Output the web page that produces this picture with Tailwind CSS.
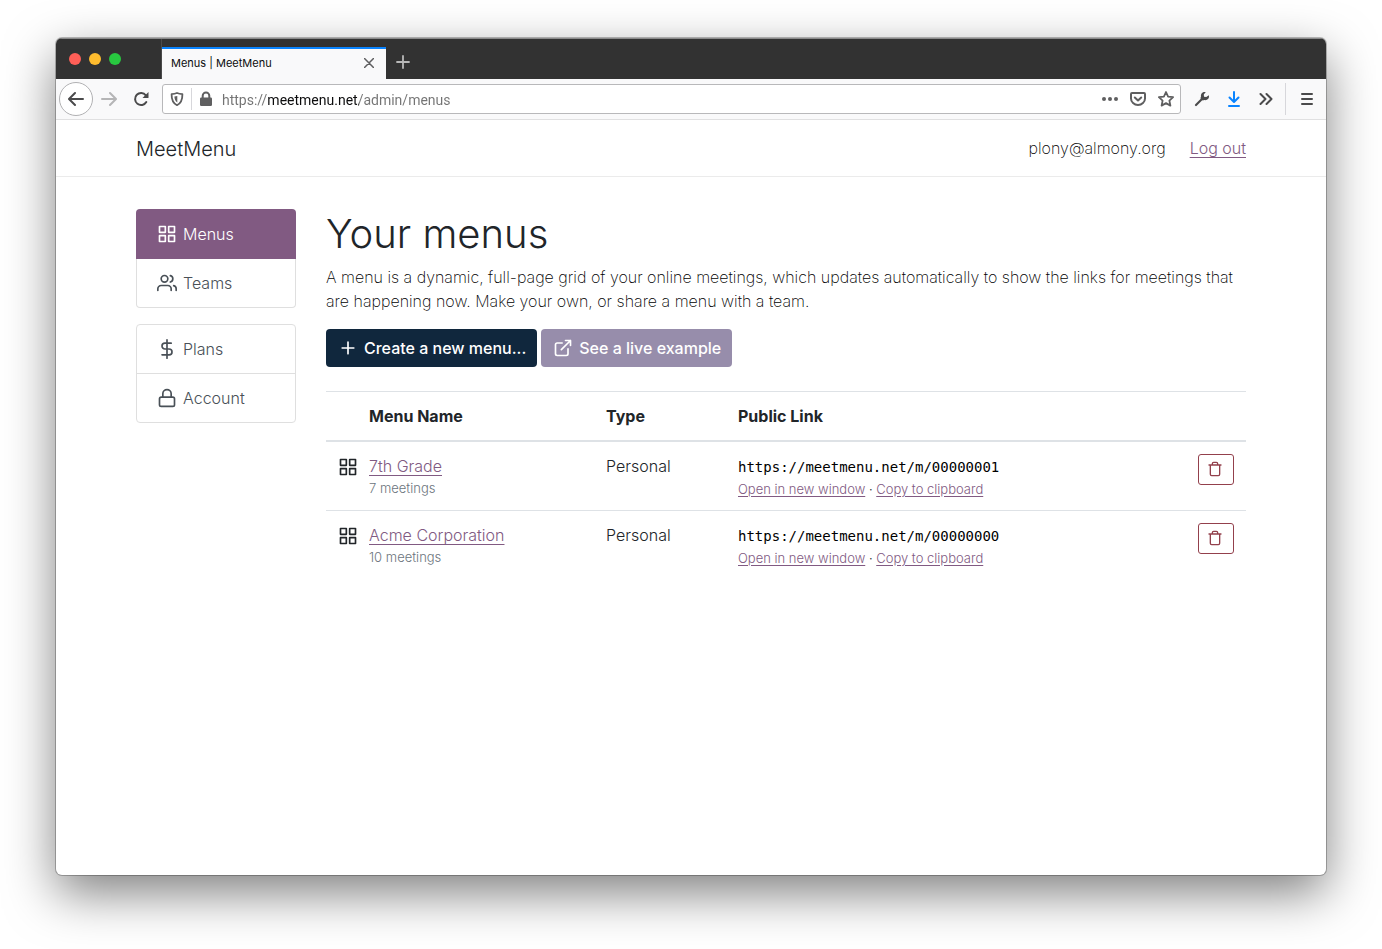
<!DOCTYPE html>
<html lang="en">
<head>
  <meta charset="UTF-8">
  <meta name="viewport" content="width=device-width, initial-scale=1.0">
  <title>Menus | MeetMenu</title>
  <script src="https://cdn.jsdelivr.net/npm/@tailwindcss/browser@4"></script>
</head>
<body class="min-h-screen flex flex-col bg-white px-14 pt-[38px] pb-[74px] font-['Inter',sans-serif] font-light text-base text-[#212529]">

  <!-- Icon sprite -->
  <svg class="hidden" aria-hidden="true">
    <symbol id="grid" viewBox="0 0 24 24"><path d="M3 3h7v7H3zM14 3h7v7h-7zM14 14h7v7h-7zM3 14h7v7H3z"/></symbol>
    <symbol id="users" viewBox="0 0 24 24"><path d="M17 21v-2a4 4 0 0 0-4-4H5a4 4 0 0 0-4 4v2"/><circle cx="9" cy="7" r="4"/><path d="M23 21v-2a4 4 0 0 0-3-3.87M16 3.13a4 4 0 0 1 0 7.75"/></symbol>
    <symbol id="dollar" viewBox="0 0 24 24"><path d="M12 1v22M17 5H9.500a3.500 3.500 0 0 0 0 7h5a3.500 3.500 0 0 1 0 7H6"/></symbol>
    <symbol id="lock" viewBox="0 0 24 24"><rect x="3" y="11" width="18" height="11" rx="2"/><path d="M7 11V7a5 5 0 0 1 10 0v4"/></symbol>
    <symbol id="plus" viewBox="0 0 24 24"><path d="M12 5v14M5 12h14"/></symbol>
    <symbol id="external" viewBox="0 0 24 24"><path d="M18 13v6a2 2 0 0 1-2 2H5a2 2 0 0 1-2-2V8a2 2 0 0 1 2-2h6M15 3h6v6M10 14L21 3"/></symbol>
    <symbol id="trash" viewBox="0 0 24 24"><path d="M3 6h18M19 6v14a2 2 0 0 1-2 2H7a2 2 0 0 1-2-2V6m3 0V4a2 2 0 0 1 2-2h4a2 2 0 0 1 2 2v2"/></symbol>
  </svg>

  <!-- Browser window -->
  <div class="flex-1 flex flex-col rounded-md overflow-hidden bg-white shadow-[0_0_0_1px_rgba(0,0,0,0.25),0_18px_50px_rgba(0,0,0,0.5)]">

    <!-- Tab bar -->
    <div class="h-[41px] flex items-end bg-[#323232] border-t border-[#8a8a8a]">
      <div class="w-[106px] h-10 flex items-center gap-2 pl-[13px] border-r border-[#4a4a4a]">
        <span class="size-3 rounded-full bg-[#ff5f57]"></span>
        <span class="size-3 rounded-full bg-[#febc2e]"></span>
        <span class="size-3 rounded-full bg-[#28c840]"></span>
      </div>
      <div class="w-56 h-8 flex items-center justify-between pl-[9px] pr-3 pb-[2px] bg-[#f9f9fa] border-t-2 border-[#0a84ff]">
        <span class="text-[11px] font-normal text-[#0c0c0d]">Menus | MeetMenu</span>
        <button type="button" aria-label="Close tab">
          <svg class="size-[10px]" viewBox="0 0 10 10" fill="none" stroke="#5f5f60" stroke-width="1.500" stroke-linecap="round"><path d="M.5.500l9 9M9.500.5l-9 9"/></svg>
        </button>
      </div>
      <button type="button" aria-label="New tab" class="h-8 px-[10px] pb-[2px]">
        <svg class="size-[14px]" viewBox="0 0 14 14" fill="none" stroke="#b8b8b8" stroke-width="1.800" stroke-linecap="round"><path d="M7 1v12M1 7h12"/></svg>
      </button>
    </div>

    <!-- Toolbar -->
    <div class="h-[41px] flex items-center pl-[3px] pr-[11px] bg-[#f9f9fa] border-b border-[#e0e0e1]">
      <button type="button" aria-label="Back" class="size-[34px] flex items-center justify-center rounded-full bg-white border border-[#b1b1b3]">
        <svg class="size-4" viewBox="0 0 16 16" fill="none" stroke="#4a4a4b" stroke-width="2" stroke-linecap="round" stroke-linejoin="round"><path d="M15 8H1.500M7 2L1 8l6 6"/></svg>
      </button>
      <button type="button" aria-label="Forward" class="ml-2">
        <svg class="size-4" viewBox="0 0 16 16" fill="none" stroke="#b5b5b6" stroke-width="2" stroke-linecap="round" stroke-linejoin="round"><path d="M1 8h13.500M9 2l6 6-6 6"/></svg>
      </button>
      <button type="button" aria-label="Reload" class="ml-4">
        <svg class="size-4" viewBox="0 0 16 16" fill="none"><path d="M12.800 4.300A6 6 0 1 0 13.300 11" stroke="#4a4a4b" stroke-width="2" stroke-linecap="round"/><path d="M15.500 1v5.500a.5.5 0 0 1-.5.5H9.500z" fill="#4a4a4b"/></svg>
      </button>
      <div class="ml-[13px] flex-1 h-[30px] flex items-center px-[6px] rounded-[3px] bg-white border border-[#b8b8ba]">
        <svg class="size-4 shrink-0" viewBox="0 0 16 16" fill="none" stroke="#5f5f60"><path d="M8 2c1.800.8 3.600 1.100 5.400 1.200C13.500 8.500 12.400 12 8 14.200 3.600 12 2.500 8.500 2.600 3.200 4.400 3.100 6.200 2.800 8 2z" stroke-width="1.800" stroke-linejoin="round"/><path d="M8.300 5v6.500C6 10 5.500 8 5.400 5.600c1-.1 2-.3 2.900-.6z" fill="#5f5f60" stroke="none"/></svg>
        <span class="ml-[6px] w-px h-[22px] bg-[#d7d7db]"></span>
        <svg class="ml-[6px] size-4 shrink-0" viewBox="0 0 16 16"><path d="M4.700 7V4.700a3.300 3.300 0 0 1 6.600 0V7" fill="none" stroke="#5f5f60" stroke-width="2"/><rect x="2" y="6.500" width="12" height="8.500" rx="1.200" fill="#5f5f60"/></svg>
        <!-- Scheme and path are grey, the host is black -->
        <input type="text" aria-label="Address" value="https://meetmenu.net/admin/menus" class="ml-2 pt-[2px] flex-1 min-w-0 font-['Roboto',sans-serif] text-sm font-normal outline-none caret-black text-transparent bg-clip-text bg-[linear-gradient(90deg,#737373_46px,#0c0c0d_46px,#0c0c0d_137px,#737373_137px)]">
        <div class="flex items-center gap-3 text-[#5f5f60]">
          <button type="button" aria-label="Page actions">
            <svg class="size-4" viewBox="0 0 16 16" fill="currentColor"><circle cx="2" cy="8" r="2"/><circle cx="8" cy="8" r="2"/><circle cx="14" cy="8" r="2"/></svg>
          </button>
          <button type="button" aria-label="Save to Pocket">
            <svg class="size-4" viewBox="0 0 16 16" fill="none" stroke="currentColor" stroke-width="2" stroke-linecap="round" stroke-linejoin="round"><path d="M2 2h12a1 1 0 0 1 1 1v4.500a7 6.500 0 0 1-14 0V3a1 1 0 0 1 1-1z"/><path d="M4.800 6.500L8 9.500l3.200-3"/></svg>
          </button>
          <button type="button" aria-label="Bookmark this page">
            <svg class="size-4" viewBox="0 0 16 16" fill="none" stroke="currentColor" stroke-width="1.800" stroke-linejoin="round"><path d="M8 1l2.100 4.600 5 .6-3.700 3.400 1 5L8 12.100l-4.400 2.500 1-5L.9 6.200l5-.6z"/></svg>
          </button>
        </div>
      </div>
      <div class="ml-[13px] flex items-center gap-4 text-[#4a4a4b]">
        <button type="button" aria-label="Developer tools">
          <svg class="size-4" viewBox="0 0 16 16"><path d="M2 14l6.500-6.500" fill="none" stroke="currentColor" stroke-width="2.200" stroke-linecap="round"/><path d="M14.800 4.200L12.300 6 10 5.700 9.800 3.500l2-2.400C9 .4 6.500 2.300 7 5.500l-.6 1.800 2.300 2.300 1.800-.5c3 .4 5.200-2 4.300-4.900z" fill="currentColor"/></svg>
        </button>
        <button type="button" aria-label="Downloads">
          <svg class="size-4" viewBox="0 0 16 16" fill="none" stroke="#0a84ff" stroke-width="2" stroke-linecap="round" stroke-linejoin="round"><path d="M8 1v9.500M3.500 6.500L8 11l4.500-4.500M3 15h10"/></svg>
        </button>
        <button type="button" aria-label="More tools">
          <svg class="size-4" viewBox="0 0 16 16" fill="none" stroke="currentColor" stroke-width="2" stroke-linecap="round" stroke-linejoin="round"><path d="M2.500 3l5 5-5 5M8.500 3l5 5-5 5"/></svg>
        </button>
      </div>
      <span class="ml-[11px] w-px h-8 bg-[#d7d7db]"></span>
      <button type="button" aria-label="Open menu" class="ml-[13px] text-[#4a4a4b]">
        <svg class="size-4" viewBox="0 0 16 16" fill="none" stroke="currentColor" stroke-width="2" stroke-linecap="round"><path d="M3 3h10M3 8h10M3 13h10"/></svg>
      </button>
    </div>

    <!-- Site header -->
    <header class="h-[57px] flex items-center justify-between px-20 border-b border-[#ebebeb]">
      <a href="#" class="pt-[2px] text-xl">MeetMenu</a>
      <nav class="flex gap-6">
        <span class="font-extralight text-black">plony@almony.org</span>
        <a href="#" class="text-[#815a82] underline underline-offset-3">Log out</a>
      </nav>
    </header>

    <div class="flex gap-[30px] px-20 pt-8">
      <!-- Sidebar -->
      <aside class="w-40 shrink-0 flex flex-col gap-4 text-[#495057]">
        <nav>
          <a href="#" class="h-[50px] flex items-center gap-[6px] px-[21px] rounded-t bg-[#815a82] text-white">
            <svg class="size-5" fill="none" stroke="currentColor" stroke-width="2" stroke-linejoin="round"><use href="#grid"/></svg>Menus
          </a>
          <a href="#" class="h-[49px] flex items-center gap-[6px] px-5 rounded-b border border-t-0 border-[#dfdfdf]">
            <svg class="size-5" fill="none" stroke="currentColor" stroke-width="2" stroke-linecap="round" stroke-linejoin="round"><use href="#users"/></svg>Teams
          </a>
        </nav>
        <nav class="rounded border border-[#dfdfdf]">
          <a href="#" class="h-[49px] flex items-center gap-[6px] px-5 border-b border-[#dfdfdf]">
            <svg class="size-5" fill="none" stroke="currentColor" stroke-width="2" stroke-linecap="round" stroke-linejoin="round"><use href="#dollar"/></svg>Plans
          </a>
          <a href="#" class="h-12 flex items-center gap-[6px] px-5">
            <svg class="size-5" fill="none" stroke="currentColor" stroke-width="2" stroke-linecap="round" stroke-linejoin="round"><use href="#lock"/></svg>Account
          </a>
        </nav>
      </aside>

      <!-- Main column -->
      <main class="flex-1 min-w-0">
        <h1 class="mb-[6px] text-[40px] leading-[50px]">Your menus</h1>
        <p class="mb-4 font-extralight text-black">A menu is a dynamic, full-page grid of your online meetings, which updates automatically to show the links for meetings that are happening now. Make your own, or share a menu with a team.</p>
        <div class="mb-6 flex gap-1 font-medium text-white">
          <button type="button" class="h-[38px] flex items-center gap-[6px] pl-3 pr-[11px] rounded bg-[#10273d]">
            <svg class="size-5" fill="none" stroke="currentColor" stroke-width="2" stroke-linecap="round"><use href="#plus"/></svg>Create a new menu...
          </button>
          <a href="#" class="h-[38px] flex items-center gap-[6px] pl-3 pr-[11px] rounded bg-[#978dab]">
            <svg class="size-5" fill="none" stroke="currentColor" stroke-width="2" stroke-linecap="round" stroke-linejoin="round"><use href="#external"/></svg>See a live example
          </a>
        </div>

        <table class="w-full table-fixed text-left">
          <colgroup>
            <col class="w-[31px]">
            <col class="w-[237px]">
            <col class="w-[132px]">
            <col>
            <col class="w-15">
          </colgroup>
          <thead>
            <tr class="border-t border-b-2 border-[#dee2e6]">
              <th class="p-3"></th>
              <th class="p-3 font-bold">Menu Name</th>
              <th class="p-3 font-bold">Type</th>
              <th class="p-3 font-bold">Public Link</th>
              <th class="p-3"></th>
            </tr>
          </thead>
          <tbody class="align-top">
            <tr>
              <td class="py-[15px] pl-3">
                <svg class="size-5" fill="none" stroke="currentColor" stroke-width="2" stroke-linejoin="round"><use href="#grid"/></svg>
              </td>
              <td class="p-3">
                <a href="#" class="text-[#815a82] underline underline-offset-3">7th Grade</a>
                <div class="text-[13px] leading-5 text-[#6c757d]">7 meetings</div>
              </td>
              <td class="p-3">Personal</td>
              <td class="p-3">
                <div class="font-['DejaVu_Sans_Mono',monospace] text-sm leading-[26px] font-normal text-black">https://meetmenu.net/m/00000001</div>
                <div class="text-[13px] leading-[18px]"><a href="#" class="text-[#815a82] underline underline-offset-2">Open in new window</a> · <a href="#" class="text-[#815a82] underline underline-offset-2">Copy to clipboard</a></div>
              </td>
              <td class="p-3">
                <button type="button" aria-label="Delete 7th Grade" class="w-9 h-[31px] flex items-center justify-center pr-[2px] pb-px rounded-[3px] border border-[#93404c] text-[#93404c]">
                  <svg class="size-4" fill="none" stroke="currentColor" stroke-width="2" stroke-linecap="round" stroke-linejoin="round"><use href="#trash"/></svg>
                </button>
              </td>
            </tr>
            <tr class="border-t border-[#dee2e6]">
              <td class="py-[15px] pl-3">
                <svg class="size-5" fill="none" stroke="currentColor" stroke-width="2" stroke-linejoin="round"><use href="#grid"/></svg>
              </td>
              <td class="p-3">
                <a href="#" class="text-[#815a82] underline underline-offset-3">Acme Corporation</a>
                <div class="text-[13px] leading-5 text-[#6c757d]">10 meetings</div>
              </td>
              <td class="p-3">Personal</td>
              <td class="p-3">
                <div class="font-['DejaVu_Sans_Mono',monospace] text-sm leading-[26px] font-normal text-black">https://meetmenu.net/m/00000000</div>
                <div class="text-[13px] leading-[18px]"><a href="#" class="text-[#815a82] underline underline-offset-2">Open in new window</a> · <a href="#" class="text-[#815a82] underline underline-offset-2">Copy to clipboard</a></div>
              </td>
              <td class="p-3">
                <button type="button" aria-label="Delete Acme Corporation" class="w-9 h-[31px] flex items-center justify-center pr-[2px] pb-px rounded-[3px] border border-[#93404c] text-[#93404c]">
                  <svg class="size-4" fill="none" stroke="currentColor" stroke-width="2" stroke-linecap="round" stroke-linejoin="round"><use href="#trash"/></svg>
                </button>
              </td>
            </tr>
          </tbody>
        </table>
      </main>
    </div>
  </div>
</body>
</html>
